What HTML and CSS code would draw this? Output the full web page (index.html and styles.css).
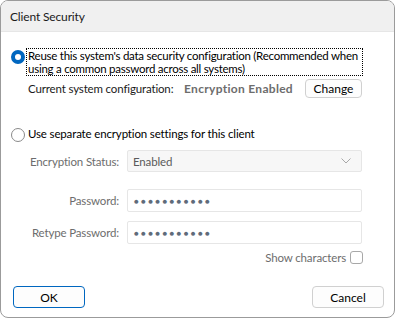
FILE: index.html
```html
<!DOCTYPE html>
<html lang="en">
<head>
  <meta charset="UTF-8">
  <title>Client Security</title>
  <link rel="stylesheet" href="styles.css">
</head>
<body>

<div class="window">
  <div class="titlebar">Client Security</div>

  <div class="content">
    <!-- option 1 -->
    <div class="option">
      <span class="radio checked"></span>
      <span class="option-label focus">Reuse this system's data security configuration (Recommended when<br>using a common password across all systems)</span>
    </div>
    <div class="current">
      <span class="current-label">Current system configuration:</span>
      <span class="current-value">Encryption Enabled</span>
      <button class="btn small">Change</button>
    </div>

    <!-- option 2 -->
    <div class="option second">
      <span class="radio"></span>
      <span class="option-label">Use separate encryption settings for this client</span>
    </div>

    <div class="form">
      <div class="row status">
        <label>Encryption Status:</label>
        <div class="field select">
          <span>Enabled</span>
          <svg width="10" height="6" viewBox="0 0 10 6"><path d="M0.5 0.5 L5 5 L9.5 0.5" fill="none" stroke="#a8a8a8" stroke-width="1"/></svg>
        </div>
      </div>
      <div class="row">
        <label>Password:</label>
        <div class="field dots">●●●●●●●●●●●</div>
      </div>
      <div class="row">
        <label>Retype Password:</label>
        <div class="field dots">●●●●●●●●●●●</div>
      </div>
      <div class="show">
        <span>Show characters</span>
        <span class="checkbox"></span>
      </div>
    </div>

    <div class="footer">
      <button class="btn primary">OK</button>
      <button class="btn">Cancel</button>
    </div>
  </div>
</div>

</body>
</html>
```

FILE: styles.css
```css
* { margin: 0; padding: 0; box-sizing: border-box; }
body { background: #fff; font-family: Lato, "Liberation Sans", sans-serif; font-size: 11.5px; letter-spacing: -0.15px; color: #000; }
.window { width: 395px; height: 318px; border: 1px solid #9b9b9b; border-radius: 8px; overflow: hidden; background: #fff; }
.titlebar { height: 31px; background: #f0f0f0; border-bottom: 1px solid #e6e6e6; padding: 8px 0 0 9px; font-size: 12px; color: #1a1a1a; }
.content { padding: 17px 0 0 10px; }
.option { display: flex; align-items: flex-start; }
.radio { width: 14px; height: 14px; border-radius: 50%; border: 1px solid #8a8a8a; background: #fff; margin: 1px 2px 0 0; flex: none; }
.radio.checked { border: 4px solid #0067c0; background: #fff; }
.option-label { line-height: 13px; padding: 0 4px 0 1px; white-space: nowrap; }
.option-label.focus { outline: 1px dotted #000; outline-offset: 0; letter-spacing: -0.25px; }
.current { display: flex; align-items: center; margin-top: 4px; padding-left: 17px; height: 18px; white-space: nowrap; }
.current-label { color: #1a1a1a; width: 156px; }
.current-value { font-weight: bold; font-size: 12px; letter-spacing: 0.3px; color: #6d6d6d; width: 121px; }
.btn { font-family: inherit; font-size: 12px; letter-spacing: 0; background: #fdfdfd; border: 1px solid #d0d0d0; border-radius: 4px; color: #000; width: 72px; height: 22px; }
.btn.small { width: 57px; height: 19px; }
.option.second { margin-top: 30px; }
.form { margin-top: 8px; color: #6d6d6d; }
.row { display: flex; align-items: center; height: 23px; margin-bottom: 9px; }
.row.status { height: 22px; margin-bottom: 17px; }
.row label { width: 108px; text-align: right; margin-right: 8px; }
.field { width: 235px; height: 23px; border: 1px solid #e6e6e6; border-radius: 2px; background: #fff; display: flex; align-items: center; padding-left: 5px; }
.select { background: #f7f7f7; justify-content: space-between; padding-right: 10px; color: #5a5a5a; height: 22px; }
.dots { color: #5f6b7a; font-size: 8px; letter-spacing: 2.3px; padding-left: 6px; }
.show { display: flex; justify-content: flex-end; align-items: center; width: 352px; margin-top: -2px; gap: 4px; }
.checkbox { width: 13px; height: 13px; border: 1px solid #a8a8a8; border-radius: 3px; background: #fff; }
.footer { display: flex; justify-content: space-between; width: 371px; margin: 22px 0 0 2px; }
.btn.primary { border-color: #0067c0; }
```
